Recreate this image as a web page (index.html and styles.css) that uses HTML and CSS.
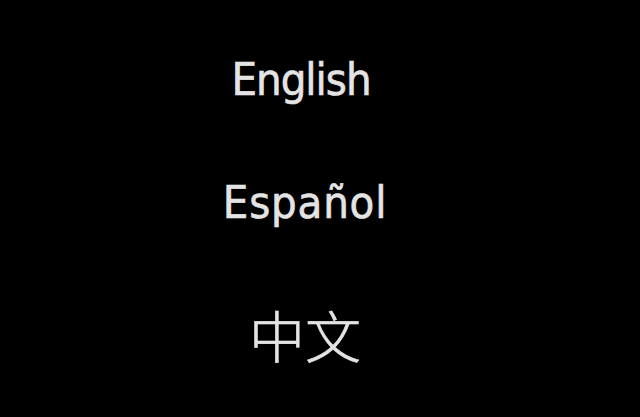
FILE: index.html
```html
<!DOCTYPE html>
<html>
<head>
<meta charset="utf-8">
<link rel="stylesheet" href="styles.css">
</head>
<body>
<div class="menu">
  <div class="item latin first">English</div>
  <div class="item latin second">Español</div>
  <div class="item cjk third">中文</div>
</div>
</body>
</html>
```
FILE: styles.css
```css
html, body {
  margin: 0;
  padding: 0;
  background: #000;
  width: 640px;
  height: 417px;
  overflow: hidden;
}
.menu {
  display: flex;
  flex-direction: column;
  align-items: center;
  padding-top: 16px;
  padding-right: 30px;
}
.item {
  color: #e4e4e4;
  display: flex;
  align-items: center;
  -webkit-text-stroke: 0.6px #e4e4e4;
}
.first { height: 127px; letter-spacing: -1px; padding-right: 8px; }
.second { height: 118px; letter-spacing: 0.8px; }
.third { height: 144px; }
.latin {
  font-family: "DejaVu Sans Condensed", "DejaVu Sans", sans-serif;
  font-stretch: condensed;
  font-size: 45px;
}
.cjk {
  font-family: "Noto Sans CJK SC", sans-serif;
  font-size: 56px;
  font-weight: 300;
}
```
